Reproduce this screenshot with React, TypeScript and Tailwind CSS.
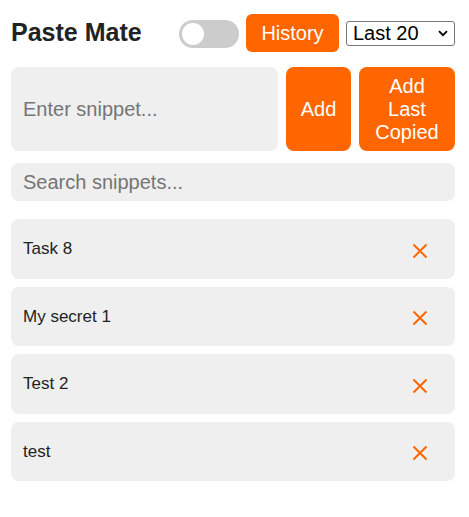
import React from "react";

const items = ["Task 8", "My secret 1", "Test 2", "test"];

function XIcon() {
  return (
    <svg width="16" height="16" viewBox="0 0 16 16" className="block">
      <path d="M1.5 1.5 L14.5 14.5 M14.5 1.5 L1.5 14.5" stroke="#ff6600" strokeWidth="2" strokeLinecap="butt" fill="none" />
    </svg>
  );
}

export default function App() {
  return (
    <div
      className="w-[469px] min-h-[517px] bg-white text-[#222]"
      style={{ fontFamily: '"Liberation Sans", Arial, sans-serif' }}
    >
      <div className="ml-[11px] w-[444px] pt-[14px]">
        <div className="flex items-center justify-between h-[38px]">
          <h1 className="text-[25px] font-bold leading-none text-[#222] mt-[-2px]">Paste Mate</h1>
          <div className="flex items-center gap-[7px]">
            <div className="relative w-[60px] h-[28px] rounded-full bg-[#cccccc] mt-[1px]">
              <div className="absolute left-[3px] top-[3px] w-[22px] h-[22px] rounded-full bg-white" />
            </div>
            <button className="w-[93px] h-[38px] rounded-[6px] bg-[#ff6600] text-white text-[20px] leading-[23px]">
              History
            </button>
            <div className="relative mt-[1px]">
              <select
                className="block appearance-none w-[109px] h-[25px] border border-[#767676] rounded-[3px] bg-white text-black text-[20px] leading-[23px] pl-[6px]"
                defaultValue="20"
              >
                <option value="20">Last 20</option>
                <option value="50">Last 50</option>
              </select>
              <svg
                width="10"
                height="7"
                viewBox="0 0 10 7"
                className="absolute right-[7px] top-[9px] pointer-events-none"
              >
                <path d="M1 1.2 L5 5.2 L9 1.2" stroke="#000" strokeWidth="1.8" fill="none" />
              </svg>
            </div>
          </div>
        </div>

        <div className="mt-[15px] flex gap-[8px] h-[84px]">
          <input
            className="flex-1 min-w-0 rounded-[8px] bg-[#efefef] px-[12px] text-[20px] placeholder:text-[#757575] outline-none"
            placeholder="Enter snippet..."
          />
          <button className="w-[65px] rounded-[8px] bg-[#ff6600] text-white text-[20px] leading-[23px]">
            Add
          </button>
          <button className="w-[96px] rounded-[8px] bg-[#ff6600] text-white text-[20px] leading-[23px]">
            Add
            <br />
            Last
            <br />
            Copied
          </button>
        </div>

        <input
          className="mt-[12px] block w-full h-[38px] rounded-[8px] bg-[#efefef] px-[12px] text-[20px] placeholder:text-[#757575] outline-none"
          placeholder="Search snippets..."
        />

        <div className="mt-[18px] flex flex-col gap-[8px]">
          {items.map((t) => (
            <div
              key={t}
              className="flex items-center justify-between h-[59.5px] rounded-[8px] bg-[#efefef] pl-[12px] pr-[27px]"
            >
              <span className="text-[17px] text-[#222]">{t}</span>
              <span className="mt-[4px]">
                <XIcon />
              </span>
            </div>
          ))}
        </div>
      </div>
    </div>
  );
}
